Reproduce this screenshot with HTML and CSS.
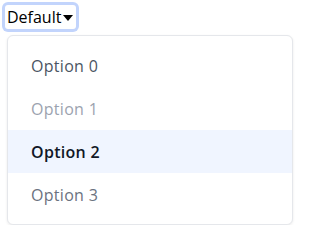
FILE: index.html
```html
<!DOCTYPE html>
<html>
<head>
<meta charset="utf-8">
<link rel="stylesheet" href="styles.css">
</head>
<body>
<div class="page">
  <button class="trigger">Default<svg class="caret" width="10" height="6" viewBox="0 0 10 6"><polygon points="0,0 10,0 5,6" fill="#000"/></svg></button>
  <ul class="menu">
    <li class="item item-normal">Option 0</li>
    <li class="item item-disabled">Option 1</li>
    <li class="item item-active">Option 2</li>
    <li class="item item-muted">Option 3</li>
  </ul>
</div>
</body>
</html>
```
FILE: styles.css
```css
html, body {
  margin: 0;
  padding: 0;
  background: #fff;
}
.page {
  padding: 5px 0 0 5px;
  font-family: "Open Sans", "Noto Sans", sans-serif;
}
.trigger {
  display: flex;
  align-items: center;
  gap: 2px;
  height: 24px;
  padding: 0 3px 0 2px;
  margin: 0;
  border: none;
  background: #fff;
  font-family: inherit;
  font-size: 16px;
  color: #000;
  border-radius: 3px;
  box-shadow: 0 0 0 3px #c2d4fc;
}
.caret {
  display: block;
  margin-top: 1px;
}
.menu {
  list-style: none;
  margin: 6px 0 0 2px;
  padding: 8px 0;
  width: 284px;
  border: 1px solid #e5e7eb;
  border-radius: 6px;
  box-shadow: 0 1px 3px rgba(0,0,0,0.08);
  background: #fff;
}
.item {
  height: 43px;
  display: flex;
  align-items: center;
  padding-left: 23px;
  font-size: 16px;
  letter-spacing: 0.3px;
}
.item-normal { color: #4b5563; }
.item-disabled { color: #9ca3af; }
.item-active { color: #111827; font-weight: 600; background: #f0f5ff; }
.item-muted { color: #6b7280; }
```
